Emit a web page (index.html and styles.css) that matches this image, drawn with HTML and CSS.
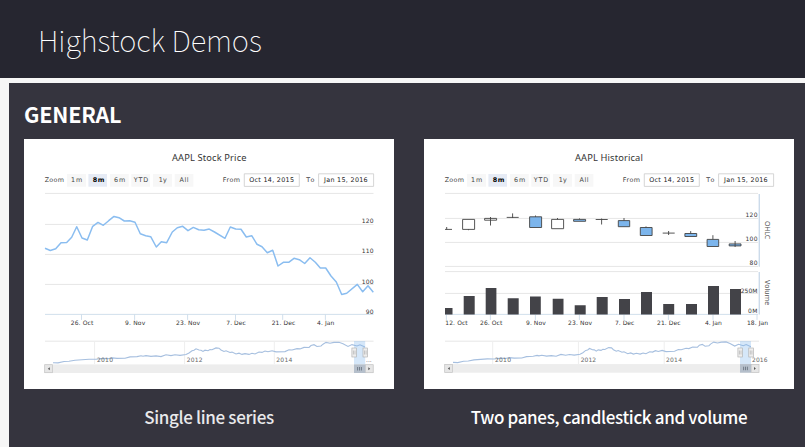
FILE: index.html
```
<!DOCTYPE html>
<html lang="en">
<head>
<meta charset="utf-8">
<title>Highstock Demos</title>
<link rel="stylesheet" href="styles.css">
</head>
<body>
<header class="top"><h1>Highstock Demos</h1></header>
<main class="panel">
<h2>GENERAL</h2>
<div class="cards">
<figure class="card">
<svg class="chart" viewBox="0 0 370 250">
<defs>
<g id="controls">
<text class="btn-t" x="20.7" y="43.2" textLength="19.3">Zoom</text>
<path class="btn" d="M43 35h19v12.7H43zM86 35h18.7v12.7H86zM107.3 35H126v12.7h-18.7zM129 35h19v12.7h-19zM150.7 35h18.7v12.7h-18.7z"/>
<path class="btn-on" d="M64.4 35H83v12.7H64.4z"/>
<text class="btn-t" x="47" y="43.2" textLength="11.3">1m</text>
<text class="btn-t bold" x="68.7" y="43.2" textLength="11.6">8m</text>
<text class="btn-t" x="90" y="43.2" textLength="11.3">6m</text>
<text class="btn-t" x="109.7" y="43.2" textLength="14.5">YTD</text>
<text class="btn-t" x="134.7" y="43.2" textLength="8">1y</text>
<text class="btn-t" x="155.5" y="43.2" textLength="9">All</text>
<text class="btn-t" x="198.8" y="43.2" textLength="17.2">From</text>
<path class="field" d="M220.3 34.8h55v12.6h-55zM294.6 34.8h55v12.6h-55z"/>
<text class="btn-t dark" x="225.2" y="43.2" textLength="44.8">Oct 14, 2015</text>
<text class="btn-t" x="282.3" y="43.2" textLength="8">To</text>
<text class="btn-t dark" x="300" y="43.2" textLength="43.7">Jan 15, 2016</text>
</g>
<path id="nav" d="M29 223.7L34 223.9L40 222.5L45 222.3L51 221.2L58 220.7L65 220.2L72 220.3L79 219.4L84 219.8L88 218.9L93 219.4L101 219.3L106 217.9L113 217.6L117 216.7L119 217.2L122 216.6L127 217.4L132 216.9L137 217.6L142 215.7L147 216.6L151 215.8L156 216.4L162 215.5L165 214L168 211.7L170 211.3L172 209.8L175 211L177 211.2L179 212.4L181 211.2L184 211.7L186 210.5L188 210.8L192 208.9L195 209.2L197 211L200 212.5L202 211.8L206 213.5L208 213.1L212 215L215 214.2L218 215.4L221 214.6L225 215.4L228 214.3L231 215L235 213L238 213.4L241 212L244 212.8L248 211.7L252 212.9L261 212.6L265 210.8L268 211L273 209.6L276 209.9L280 208.4L285 208.5L287 206.5L290 205.7L293 207.5L297 207L299 205.2L302 203.4L306 204.3L310 203.4L315 203.2L319 204.8L324 207.4L328 205.6L333 207L336 205.8L341 208"/>
<g id="handle"><rect class="handle" x="-2.3" y="209" width="4.6" height="9"/><path class="grip" d="M-.8 211.5v4M.8 211.5v4"/></g>
</defs>
<text class="title" x="148" y="22" textLength="74.5">AAPL Stock Price</text>
<use href="#controls"/>
<path class="grid" d="M21 54.4H349.5M21 85.4H349.5M21 115.4H349.5M21 145.4H349.5"/>
<path class="axis" d="M21 175.4H349.5M57.5 175.4v5.5M110.6 175.4v5.5M163.6 175.4v5.5M211.5 175.4v5.5M258.7 175.4v5.5M301.4 175.4v5.5"/>
<polyline class="price" points="21,109.3 26.3,111.5 31.7,109.7 37,103.7 42.7,103.5 47.7,98.3 52.7,87.7 58,99 63.3,101 68.7,87.3 74,83.4 79.3,86.3 84.7,81.7 90,77.4 95,78.7 100.3,82 105.7,81.7 111,83.3 116.3,94.7 121.7,96.7 126.7,97.7 132.3,108 137.3,102.7 142.7,103.7 148.3,93 153.3,88.7 158.7,87.3 164,91.7 169.3,88.4 174.7,90.7 180,91.2 185.2,90.1 190.5,93 201,99.3 206.3,88 211.7,90 217,90.3 222.3,98 227.7,96.7 233,105.3 238,107.7 243.3,113.7 248.7,111.2 254,127 259.3,123.3 264.7,123.3 270,119.3 275.3,120.7 280.7,124.5 286,118.8 291.3,123.3 296.3,129 301.7,129 307,137 312.3,143 317.7,155.5 322.7,154.3 333.3,145.4 338.7,152.7 344,146.7 349.3,153.3"/>
<g class="lbl">
<text x="337.7" y="84.2" textLength="12">120</text><text x="337.7" y="114.4" textLength="12">110</text><text x="337.7" y="144.6" textLength="12">100</text><text x="341.7" y="174.8" textLength="8">90</text>
<text x="46.7" y="186.4" textLength="22.6">26. Oct</text><text x="101" y="186.4" textLength="20.2">9. Nov</text><text x="152" y="186.4" textLength="24">23. Nov</text><text x="202.3" y="186.4" textLength="19.5">7. Dec</text><text x="247.7" y="186.4" textLength="23.6">21. Dec</text><text x="293" y="186.4" textLength="17.3">4. Jan</text>
</g>
<path class="grid" d="M21 202.2H349.5"/><path class="grid thin" d="M70.6 202v23M160.6 202v23M250.3 202v23"/>
<use class="nav" href="#nav"/>
<g class="year"><text x="73" y="223.1" textLength="16">2010</text><text x="162.7" y="223.1" textLength="16">2012</text><text x="252.3" y="223.1" textLength="16">2014</text><text x="342" y="223.1" textLength="5.7">...</text></g>
<rect class="track" x="20.4" y="225.4" width="329" height="8.6"/>
<rect class="end" x="20.7" y="225.7" width="7.8" height="8"/><path class="arrow" d="M25.8 228.2v3l-1.9-1.5z"/>
<rect class="end" x="341.4" y="225.7" width="7.8" height="8"/><path class="arrow" d="M344.3 228.2v3l1.9-1.5z"/>
<rect class="mask" x="330" y="202" width="11.2" height="23.4"/><rect class="thumb" x="330" y="225.4" width="11.2" height="8.6"/><path class="bars-i" d="M333.6 228v3.5M335.5 228v3.5M337.4 228v3.5"/>
<use href="#handle" x="330.2"/><use href="#handle" x="341.3"/>
</svg>
<figcaption class="cap soft"><span>Single line series</span></figcaption>
</figure>
<figure class="card">
<svg class="chart" viewBox="0 0 370 250">
<text class="title" x="151" y="22" textLength="67.8">AAPL Historical</text>
<use href="#controls"/>
<path class="grid" d="M21 54.4H334M21 79.4H334M21 103.4H334M21 127.4H334M21 132.6H334M21 154.4H334"/>
<path class="axis" d="M21 175.4H334M22.4 175.4v5.5M66.4 175.4v5.5M111.4 175.4v5.5M155.4 175.4v5.5M200 175.4v5.5M244.4 175.4v5.5M289 175.4v5.5M333 175.4v5.5"/>
<path class="axis wide" d="M335.3 55v72.8M335.3 133v42.5"/>
<g class="candle">
<path d="M21 90.4h7M22.7 88v2.5"/>
<path d="M38.6 80.4h12v10h-12zM44.5 90.4v.8"/>
<path d="M66.5 78v8.5M60.6 79.4h12v1.8h-12z"/>
<path d="M82.7 78.4h12M88.6 74.4v4.6"/>
<path class="down" d="M105.6 77.8h12v10.7h-12zM111.5 76.5v1.3"/>
<path d="M127.6 80.4h12v9.3h-12zM133.5 79v1.4"/>
<path class="down" d="M149.6 80.4h12v1.9h-12zM155.5 79.4v1"/>
<path d="M171.7 80.5h12M177.6 79.5v6"/>
<path class="down" d="M194.3 81.6h11.4v6.1h-11.4zM200 79v2.6"/>
<path class="down" d="M216.3 88.5h11.8v8h-11.8zM222 87.4v1"/>
<path d="M238.7 94.1h12M244.6 92v4"/>
<path class="down" d="M260.9 94.5h11.8v3h-11.8zM266.7 92.1v2.4"/>
<path class="down" d="M283.1 100.4h11.6v7.1h-11.6zM288.9 96.2v4.2"/>
<path class="down" d="M311.1 102v6M305.2 104.9h11.8v2h-11.8z"/>
</g>
<path class="volume" d="M21 175.4V169h7.5v6.4zM39.7 175.4V157h11v18.4zM61.7 175.4V149h10.7v26.4zM83.7 175.4v-16.1h11v16.1zM106 175.4v-17.9h10.8v17.9zM128.7 175.4v-15.7h10.8v15.7zM150.7 175.4v-9.1h11v9.1zM172.7 175.4V158h11v17.4zM195 175.4V160h11v15.4zM217 175.4V153h11v22.4zM239.2 175.4V165h11v10.4zM262 175.4V165h11v10.4zM284 175.4V147h11v28.4zM306 175.4V150h11v25.4z"/>
<g class="lbl">
<text x="321.5" y="78.2" textLength="12">120</text><text x="321.5" y="102.2" textLength="12">100</text><text x="325.5" y="126.2" textLength="8">80</text><text x="316.7" y="153.5" textLength="16.8">250M</text><text x="324" y="174.4" textLength="9.5">0M</text>
<text x="21.3" y="186" textLength="22.4">12. Oct</text><text x="56" y="186" textLength="22.3">26. Oct</text><text x="102" y="186" textLength="19.7">9. Nov</text><text x="144" y="186" textLength="24">23. Nov</text><text x="191" y="186" textLength="19.3">7. Dec</text><text x="233" y="186" textLength="23.6">21. Dec</text><text x="281" y="186" textLength="16.7">4. Jan</text><text x="323" y="186" textLength="21">18. Jan</text>
</g>
<text class="side" transform="translate(341 82) rotate(90)" textLength="18.3">OHLC</text>
<text class="side" transform="translate(341 141) rotate(90)" textLength="25.3">Volume</text>
<path class="grid" d="M21 202.2H335"/><path class="grid thin" d="M68.7 202v23M154.4 202v23M240.2 202v23"/>
<use class="nav" href="#nav" transform="translate(1.3 -.3) scale(.955 1)"/>
<rect class="track" x="20.4" y="225.1" width="314.8" height="8.6"/>
<rect class="end" x="20.7" y="225.4" width="7.8" height="8"/><path class="arrow" d="M25.8 227.9v3l-1.9-1.5z"/>
<rect class="end" x="327.2" y="225.4" width="7.8" height="8"/><path class="arrow" d="M330 227.9v3l1.9-1.5z"/>
<rect class="mask" x="316" y="202" width="11" height="23.2"/><rect class="thumb" x="316" y="225.1" width="11" height="8.6"/><path class="bars-i" d="M319.6 227.7v3.5M321.5 227.7v3.5M323.4 227.7v3.5"/>
<g class="year"><text x="71" y="222.8" textLength="16">2010</text><text x="156.7" y="222.8" textLength="15.5">2012</text><text x="242" y="222.8" textLength="16">2014</text><text x="328" y="222.8" textLength="15.5">2016</text></g>
<use href="#handle" x="316.2"/><use href="#handle" x="327.1"/>
</svg>
<figcaption class="cap"><span>Two panes, candlestick and volume</span></figcaption>
</figure>
</div>
</main>
</body>
</html>
```
FILE: styles.css
```
* { box-sizing: border-box; margin: 0; padding: 0; }
html, body { height: 100%; }
body { background: #f6f6f6; overflow: hidden; font-family: "Noto Sans CJK SC", "Noto Sans", sans-serif; color: #fff; }
.top { height: 78px; background: #262630; padding-left: 38px; display: flex; align-items: center; }
h1 { font-size: 29.2px; font-weight: 100; line-height: 40px; padding-bottom: 1px; letter-spacing: -.05px; white-space: nowrap; }
.panel { margin: 5px 0 0 9px; height: 364px; background: #35343e; padding: 16px 0 0 15px; }
h2 { font-size: 21.5px; font-weight: 700; line-height: 30px; height: 40px; letter-spacing: -.2px; }
.cards { display: flex; gap: 30px; }
.card { width: 370px; flex: none; }
.chart { display: block; width: 370px; height: 250px; background: #fff; font-family: "Noto Sans", sans-serif; }
.cap { height: 55px; display: flex; align-items: center; justify-content: center; font-size: 17px; font-weight: 500; letter-spacing: -.34px; white-space: nowrap; }
.soft { color: #e9e9eb; }
.title { font-size: 9.3px; fill: #333; }
.btn-t { font-size: 6.4px; fill: #444; font-family: "DejaVu Sans", sans-serif; }
.dark { fill: #222; }
.bold { font-weight: 700; fill: #000; }
.btn { fill: #f7f7f7; }
.btn-on { fill: #e6ebf5; }
.field { fill: #fff; stroke: #ccc; stroke-width: .8; }
.grid { stroke: #e6e6e6; stroke-width: 1; fill: none; }
.thin { stroke: #eee; }
.axis { stroke: #ccdbea; stroke-width: .9; fill: none; }
.wide { stroke-width: 1.4; }
.price { fill: none; stroke: #8abdf0; stroke-width: 1.5; stroke-linejoin: round; }
.lbl { font-size: 6px; fill: #333; font-family: "DejaVu Sans", sans-serif; }
.year { font-size: 6px; fill: #666; font-family: "DejaVu Sans", sans-serif; }
.side { font-size: 7px; fill: #555; }
.nav { fill: none; stroke: #a6bfdf; stroke-width: 1.1; }
.track { fill: #ededed; }
.end { fill: #e6e6e6; stroke: #c4c4c4; stroke-width: .7; }
.arrow { fill: #555; }
.mask { fill: #7cb5ec; fill-opacity: .32; }
.thumb { fill: #b5bfcb; }
.bars-i { stroke: #566270; stroke-width: .7; }
.handle { fill: #eee; stroke: #aaa; stroke-width: .6; }
.grip { stroke: #999; stroke-width: .5; }
.candle path { fill: #fff; stroke: #444; stroke-width: .9; }
.candle .down { fill: #7cb5ec; }
.volume { fill: #434348; }
```
